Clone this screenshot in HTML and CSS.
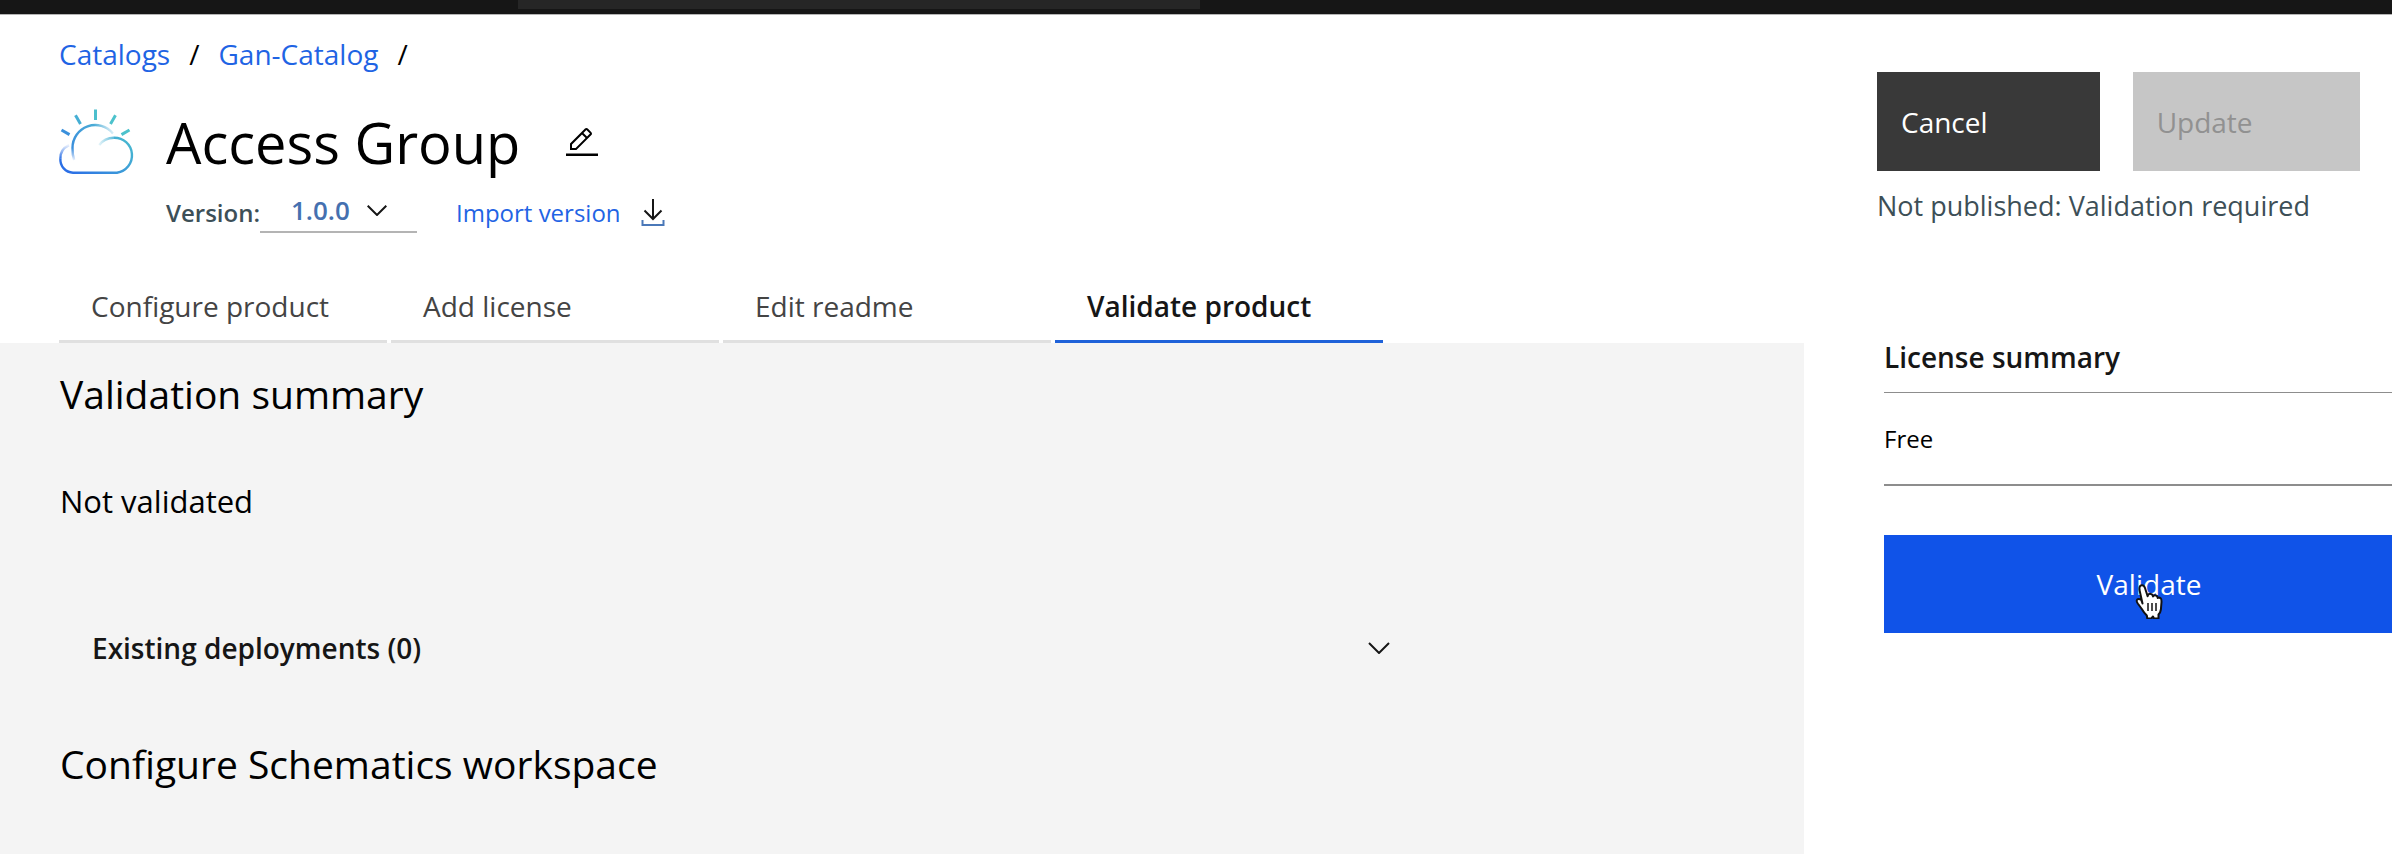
FILE: index.html
```html
<!DOCTYPE html>
<html lang="en">
<head>
<meta charset="utf-8">
<meta name="viewport" content="width=device-width, initial-scale=1">
<title>Access Group - Catalogs</title>
<link rel="stylesheet" href="styles.css">
</head>
<body>
<header class="topbar"><div class="topbar-search"></div></header>
<div class="page">
  <main class="main">
    <nav class="breadcrumb" aria-label="Breadcrumb">
      <a class="link" href="#">Catalogs</a><span>/</span><a class="link" href="#">Gan-Catalog</a><span>/</span>
    </nav>

    <div class="title-row">
      <svg class="cloud" viewBox="18 18 76 68" fill="none" stroke-width="2.4" stroke-linecap="butt" aria-hidden="true">
        <defs>
          <linearGradient id="sky" gradientUnits="userSpaceOnUse" x1="30" y1="83" x2="84" y2="30">
            <stop offset="0" stop-color="#2b6fe6"/><stop offset="1" stop-color="#4cc4cc"/>
          </linearGradient>
          <linearGradient id="hill" gradientUnits="userSpaceOnUse" x1="33" y1="60" x2="74" y2="42">
            <stop offset="0" stop-color="#3a8fdc"/><stop offset=".65" stop-color="#4aabd6"/><stop offset="1" stop-color="#4aabd6" stop-opacity=".15"/>
          </linearGradient>
          <linearGradient id="foot" gradientUnits="userSpaceOnUse" x1="0" y1="58" x2="0" y2="71">
            <stop offset="0" stop-color="#3a8fdc"/><stop offset="1" stop-color="#3a7fe4" stop-opacity=".05"/>
          </linearGradient>
          <linearGradient id="left" gradientUnits="userSpaceOnUse" x1="0" y1="55" x2="0" y2="69">
            <stop offset="0" stop-color="#2b6fe6" stop-opacity=".1"/><stop offset="1" stop-color="#2b6fe6"/>
          </linearGradient>
          <linearGradient id="puff" gradientUnits="userSpaceOnUse" x1="58" y1="0" x2="76" y2="0">
            <stop offset="0" stop-color="#4cb4d6" stop-opacity=".1"/><stop offset="1" stop-color="#4cb4d6"/>
          </linearGradient>
        </defs>
        <g stroke-width="3">
          <path stroke="#3a90dc" d="M21.500 40l8 4.600"/>
          <path stroke="#45aed4" d="M35.500 25.300l5 8.600"/>
          <path stroke="#4cbfcd" d="M55.500 19.500v10.500"/>
          <path stroke="#4cc2cc" d="M75.500 25.300l-5 8.600M89.500 40l-8 4.600"/>
        </g>
        <path stroke="url(#sky)" d="M74 47.700a17.600 17.600 0 0 1 3 35H33a13 13 0 0 1-12.600-14"/>
        <path stroke="url(#hill)" d="M32.500 58A22.800 22.800 0 0 1 73 43.500"/>
        <path stroke="url(#foot)" d="M32.500 58q-.2 7 1.700 12"/>
        <path stroke="url(#left)" d="M20.400 68.700Q20 59.500 29 55.200"/>
        <path stroke="url(#puff)" d="M59.200 55Q64.500 47.800 74 47.700"/>
      </svg>
      <h1 class="title">Access Group</h1>
      <button class="icon-button" type="button" aria-label="Edit name">
        <svg class="edit" viewBox="0 0 32 32" fill="currentColor" aria-hidden="true">
          <path d="M0 27.500h32v2.600H0zM25.400 9c.8-.8.8-2 0-2.800l-3.600-3.600c-.8-.8-2-.8-2.800 0l-15 15V24h6.400zM20.400 4L24 7.600l-3 3L17.400 7zM6 22v-3.600l10-10 3.600 3.600-10 10z"/>
        </svg>
      </button>
    </div>

    <div class="version-row">
      <label class="version-label" for="version">Version:</label>
      <div class="select-wrap">
        <select class="select" id="version"><option>1.0.0</option></select>
        <svg class="select-chevron" viewBox="0 0 20 11" fill="none" stroke="#161616" stroke-width="2" aria-hidden="true"><path d="M.7.7L10 10 19.300.7"/></svg>
      </div>
      <a class="import link" href="#">Import version
        <svg class="download" viewBox="0 0 24 28" fill="none" stroke-width="2" aria-hidden="true">
          <path stroke="#161616" d="M12 0v20M3.500 11.500L12 20l8.500-8.500"/>
          <path stroke="#4a78b8" d="M1.500 21v5h21v-5"/>
        </svg>
      </a>
    </div>

    <div class="tabs" role="tablist">
      <button class="tab" type="button" role="tab" aria-selected="false">Configure product</button>
      <button class="tab" type="button" role="tab" aria-selected="false">Add license</button>
      <button class="tab" type="button" role="tab" aria-selected="false">Edit readme</button>
      <button class="tab tab-active" type="button" role="tab" aria-selected="true">Validate product</button>
    </div>

    <section class="panel" role="tabpanel">
      <h2 class="heading">Validation summary</h2>
      <p class="state">Not validated</p>
      <button class="accordion" type="button" aria-expanded="false">
        <span>Existing deployments (0)</span>
        <svg class="accordion-chevron" viewBox="0 0 22 12" fill="none" stroke="currentColor" stroke-width="2" aria-hidden="true"><path d="M1 1l10 10L21 1"/></svg>
      </button>
      <h2 class="heading">Configure Schematics workspace</h2>
    </section>
  </main>

  <aside class="side">
    <div class="actions">
      <button class="button button-dark" type="button">Cancel</button>
      <button class="button button-disabled" type="button" disabled>Update</button>
    </div>
    <p class="status">Not published: Validation required</p>
    <section class="license">
      <h3 class="license-title">License summary</h3>
      <p class="license-value">Free</p>
      <div class="validate-wrap">
        <button class="validate" type="button">Validate</button>
        <svg class="pointer" viewBox="0 0 30 36" aria-hidden="true">
          <path fill="#fff" stroke="#111" stroke-width="2" stroke-linejoin="round" d="M9.500 20.500L6.500 7Q6 2.500 8.800 2.200 11 2 12 5l2.600 8.200q.8-3 3.400-2.200 1.800.4 2 2.400 1-1.600 3-.9 1.500.6 1.700 2.500 1.500-.9 3 .3.900.8.800 3.700l-.6 7.500q-.4 3-2.400 5v4h-4.500l-1-2-1.700 2h-4l-.5-3q-3-3-5-6.500l-4-5.500q-1.800-2.600-.6-3.900 1.500-1.400 4.100.4z"/>
          <path stroke="#111" stroke-width="1.500" d="M15 20v8M19 20v8M23 20v8"/>
        </svg>
      </div>
    </section>
  </aside>
</div>
</body>
</html>
```
FILE: styles.css
```css
* {
  box-sizing: border-box;
}

body {
  margin: 0;
  min-height: 100vh;
  display: flex;
  flex-direction: column;
  background: #fff;
  color: #000;
  font-family: "Open Sans", "Noto Sans", sans-serif;
  font-size: 28px;
  line-height: 36px;
  overflow-x: hidden;
}

h1, h2, h3, p {
  margin: 0;
  font-weight: 400;
}

button, select {
  font: inherit;
  color: inherit;
  background: none;
  border: 0;
  border-radius: 0;
  padding: 0;
  text-align: left;
}

svg {
  display: block;
}

.link {
  color: #1f64e4;
  text-decoration: none;
}

.topbar {
  height: 15px;
  background: #161616;
  border-bottom: 1px solid #b4b4b4;
}

.topbar-search {
  width: 682px;
  height: 9px;
  margin-left: 518px;
  background: #262626;
}

.page {
  flex: 1;
  display: grid;
  grid-template-columns: 1fr 588px;
}

.main {
  display: flex;
  flex-direction: column;
}

.breadcrumb {
  display: flex;
  gap: 19px;
  padding: 21px 0 0 59px;
}

.title-row {
  display: flex;
  align-items: center;
  margin: 36px 0 0 58px;
}

.cloud {
  width: 76px;
  height: 68px;
}

.title {
  margin-left: 32px;
  font-size: 56px;
  line-height: 64px;
}

.icon-button {
  margin-left: 46px;
}

.edit {
  width: 32px;
  height: 32px;
}

.version-row {
  display: flex;
  align-items: flex-start;
  margin: 18px 0 0 166px;
  font-size: 24px;
  line-height: 37px;
}

.version-label {
  color: #3d4f57;
  font-weight: 600;
}

.select-wrap {
  position: relative;
  width: 157px;
}

.select {
  appearance: none;
  display: block;
  width: 100%;
  height: 39px;
  padding: 0 0 5px 31px;
  border-bottom: 2px solid #b4b4b4;
  color: #4570b0;
  font-size: 26px;
  font-weight: 600;
  line-height: 32px;
}

.select-chevron {
  position: absolute;
  right: 30px;
  top: 11px;
  width: 20px;
  height: 11px;
}

.import {
  display: flex;
  gap: 20px;
  margin-left: 39px;
}

.download {
  width: 24px;
  height: 28px;
  margin-top: 5px;
}

.tabs {
  display: flex;
  gap: 4px;
  margin: 39px 0 0 59px;
}

.tab {
  width: 328px;
  padding: 16px 0 16px 32px;
  border-bottom: 3px solid #e0e0e0;
  color: #444;
}

.tab-active {
  border-color: #1f62d9;
  color: #161616;
  font-weight: 600;
}

.panel {
  flex: 1;
  padding: 27px 60px 66px;
  background: #f4f4f4;
}

.heading {
  font-size: 39px;
  line-height: 48px;
}

.state {
  margin-top: 63px;
  font-size: 31px;
  line-height: 40px;
}

.accordion {
  display: flex;
  align-items: center;
  justify-content: space-between;
  width: 100%;
  max-width: 1362px;
  margin: 109px 0 74px;
  padding: 0 32px;
  color: #161616;
  font-weight: 600;
}

.accordion-chevron {
  width: 22px;
  height: 12px;
}

.side {
  padding: 57px 0 0 73px;
}

.actions {
  display: flex;
  gap: 33px;
  margin-right: 32px;
}

.button {
  height: 99px;
  padding: 0 24px;
}

.button-dark {
  flex: 222 0 0;
  background: #393939;
  color: #fff;
}

.button-disabled {
  flex: 228 0 0;
  background: #c6c6c6;
  color: #919191;
}

.status {
  margin-top: 17px;
  color: #3d4f57;
  font-size: 27px;
}

.license {
  margin: 115px 0 0 7px;
}

.license-title {
  padding-bottom: 17px;
  border-bottom: 1px solid #8d8d8d;
  color: #161616;
  font-size: 28px;
  font-weight: 600;
}

.license-value {
  padding: 30px 0 29px;
  border-bottom: 2px solid #8d8d8d;
  font-size: 24px;
  line-height: 32px;
}

.validate-wrap {
  position: relative;
  margin: 49px -22px 0 0;
}

.validate {
  width: 100%;
  height: 98px;
  background: #1053e8;
  color: #fff;
  text-align: center;
}

.pointer {
  position: absolute;
  left: calc(50% - 16px);
  top: 48px;
  width: 30px;
  height: 36px;
}
```
